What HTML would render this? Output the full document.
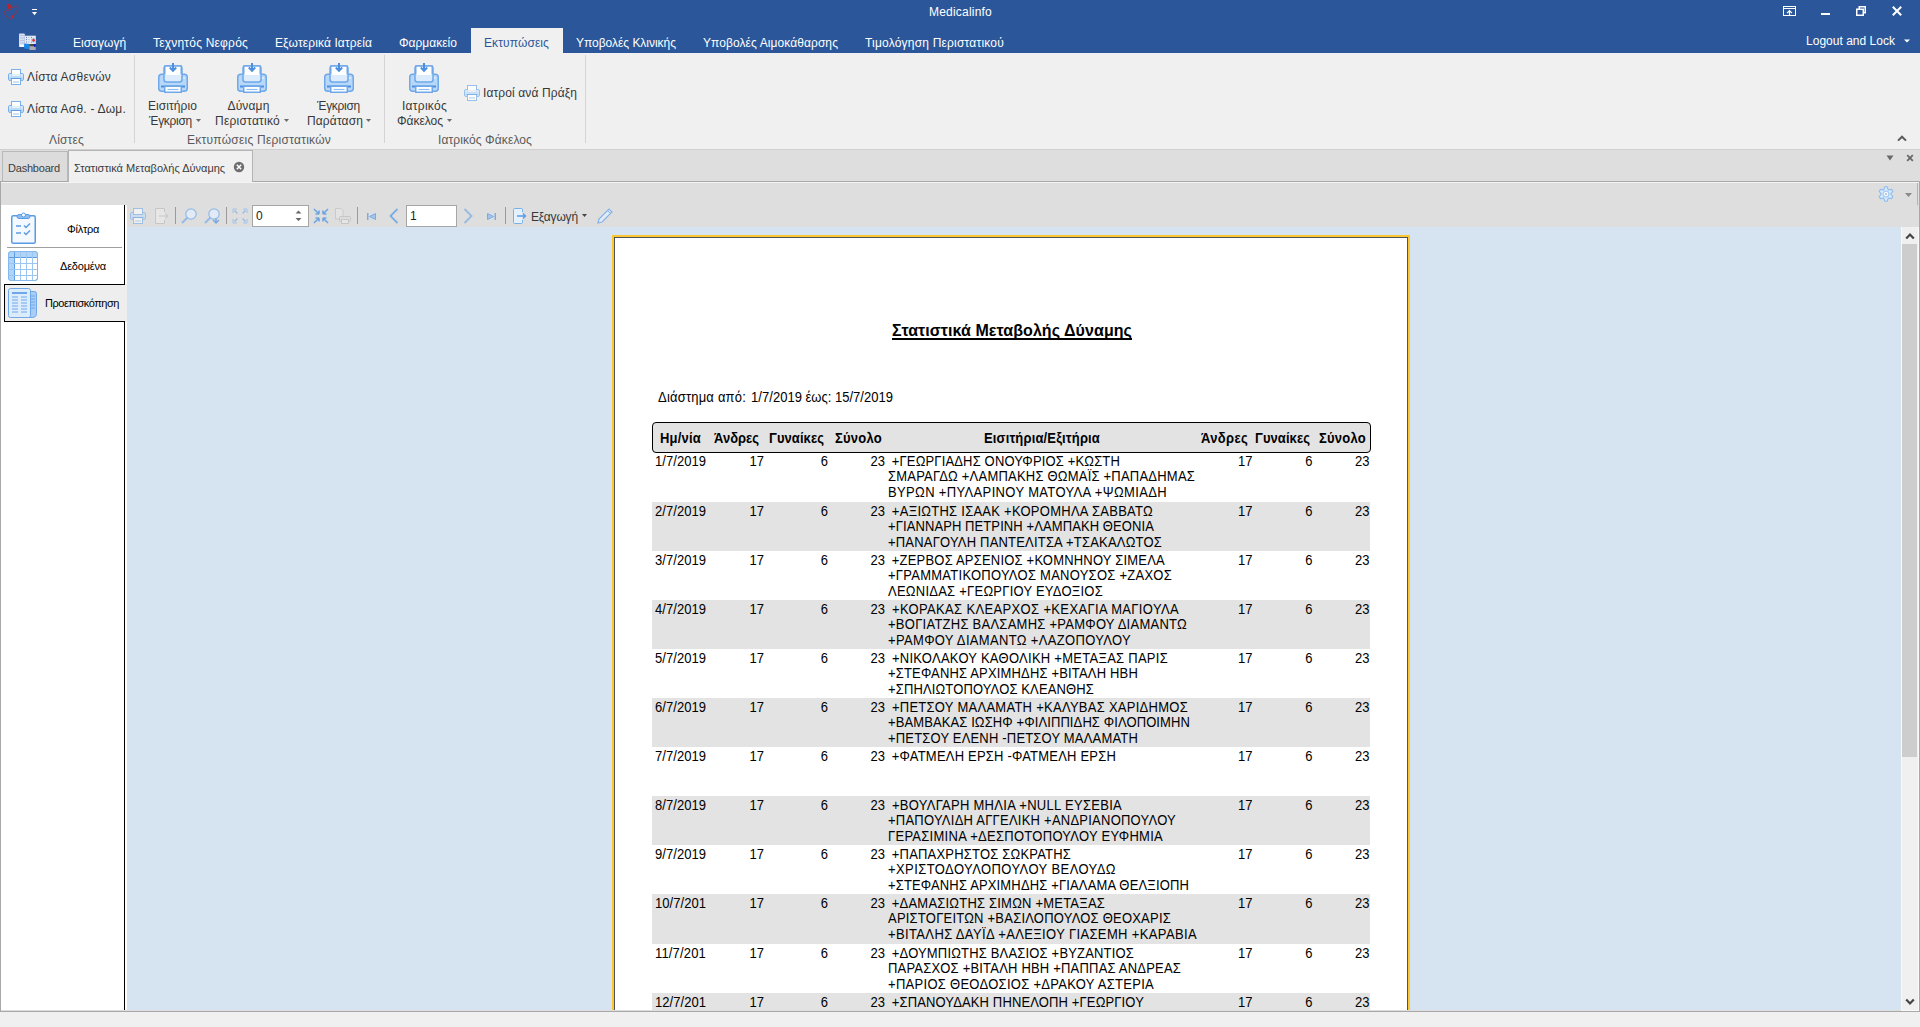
<!DOCTYPE html>
<html><head><meta charset="utf-8">
<style>
*{box-sizing:border-box}
html,body{margin:0;padding:0}
body{width:1920px;height:1027px;overflow:hidden;position:relative;background:#f0f0f0;font-family:"Liberation Sans",sans-serif;color:#262626}
.a{position:absolute;white-space:pre;line-height:1}
.t12{font-size:12px}
.w{color:#fff}
svg{position:absolute;overflow:visible}
.pg{position:absolute;left:612px;top:235px;width:798px;height:800px;background:#fff;border:2px solid #fcc630}
.pg .in{position:absolute;left:0;top:0;right:0;bottom:0;border:1px solid #50535c}
.rp{position:absolute;color:#000;white-space:pre;line-height:1}
</style></head><body>
<div style="position:absolute;left:0;top:0;width:1920px;height:53px;background:#2b579a"></div>
<svg style="left:0px;top:0px" width="22" height="24" viewBox="0 0 22 24">
<path d="M9.8 10.4 C8 10.1 5.6 10 4.6 11.3 C3.8 12.5 4 14 5.2 15.3 C7 17.2 9.5 18.5 11.2 19.6" fill="none" stroke="#b8242b" stroke-width="0.9" opacity="0.7"/>
<path d="M9.6 10.6 C11.4 8.6 13.5 6.3 15.8 6.1 C17.2 6.1 17.9 7 17.8 8.2 C17.6 10.5 16 13 12.8 16.5" fill="none" stroke="#b8242b" stroke-width="0.9" opacity="0.85"/>
<ellipse cx="8.9" cy="6.4" rx="2.1" ry="2.6" fill="#b8242b" transform="rotate(-12 8.9 6.4)"/>
<path d="M9.7 9 L9.4 13.3" stroke="#b8242b" stroke-width="0.8" opacity="0.7"/>
<circle cx="12.7" cy="16.7" r="1.5" fill="#c0262d"/></svg>
<svg style="left:32px;top:9px" width="5" height="7" viewBox="0 0 5 7"><rect x="0" y="0" width="5" height="1" fill="#fff"/><path d="M0 3 L5 3 L2.5 6.2 Z" fill="#fff"/></svg>
<div class="a" style="left:929.00px;top:6.34px;font-size:12px;color:#ffffff;letter-spacing:0.209px;">Medicalinfo</div>
<svg style="left:1783px;top:6px" width="13" height="10" viewBox="0 0 13 10"><rect x="0.5" y="0.5" width="12" height="9" fill="none" stroke="#fff" stroke-width="1"/><path d="M0.5 2.5 H12.5" stroke="#fff" stroke-width="1"/><path d="M6.5 9.5 V5 M4 7.2 L6.5 4.7 L9 7.2" stroke="#fff" stroke-width="1.2" fill="none"/></svg>
<div style="position:absolute;left:1821px;top:13px;width:9px;height:2px;background:#fff"></div>
<svg style="left:1856px;top:6px" width="10" height="10" viewBox="0 0 10 10"><rect x="0.75" y="3.25" width="6.5" height="6" fill="none" stroke="#fff" stroke-width="1.5"/><path d="M3.25 3.25 V0.75 H9.25 V6.75 H7.25" fill="none" stroke="#fff" stroke-width="1.5"/></svg>
<svg style="left:1892px;top:6px" width="10" height="10" viewBox="0 0 10 10"><path d="M0.8 0.8 L9.2 9.2 M9.2 0.8 L0.8 9.2" stroke="#fff" stroke-width="2"/></svg>
<svg style="left:19px;top:33px" width="18" height="18" viewBox="0 0 18 18">
<rect x="0" y="0.6" width="5.8" height="13.4" rx="0.8" fill="#d9dff0"/>
<path d="M0.8 2.5 H5 M0.8 5 H5 M0.8 7.5 H5 M0.8 10 H5" stroke="#aeb9d8" stroke-width="0.7"/>
<rect x="0.8" y="11.8" width="4" height="2" fill="#fff"/>
<rect x="5.8" y="2.7" width="11" height="8.3" fill="#e6eaf5"/>
<path d="M7 4.4 H7.8 M12 4.4 H12.8 M7 6.6 H7.8 M12 6.6 H12.8 M7 9.1 H7.8 M12 9.1 H12.8" stroke="#3a64b0" stroke-width="1"/>
<path d="M9 4.4 H10.6 M9 6.6 H10.6 M9 9.1 H10.6" stroke="#b7c3e0" stroke-width="0.9"/>
<circle cx="14.6" cy="7.2" r="2.5" fill="#b9d4f2"/>
<path d="M14.6 5.2 L16.4 7.2 L14.6 9.2 L12.8 7.2Z" fill="#e53a3a"/>
<path d="M5.2 10.4 L10.4 11 L10.4 16.2 L5.2 15.4Z" fill="#1a86e6"/>
<rect x="10.5" y="11" width="6.2" height="6" fill="#a9aab4"/>
<rect x="10.5" y="11" width="6.2" height="2.2" fill="#4a4a3c"/>
<rect x="14.8" y="11.2" width="1.9" height="2.5" fill="#1010d0"/>
</svg>
<div style="position:absolute;left:471px;top:28px;width:92px;height:26px;background:#f0f0f0"></div>
<div class="a" style="left:73.00px;top:36.84px;font-size:12px;color:#ffffff;">Εισαγωγή</div>
<div class="a" style="left:153.00px;top:36.84px;font-size:12px;color:#ffffff;letter-spacing:0.203px;">Τεχνητός Νεφρός</div>
<div class="a" style="left:275.00px;top:36.84px;font-size:12px;color:#ffffff;letter-spacing:0.113px;">Εξωτερικά Ιατρεία</div>
<div class="a" style="left:399.00px;top:36.84px;font-size:12px;color:#ffffff;letter-spacing:0.012px;">Φαρμακείο</div>
<div class="a" style="left:576.00px;top:36.84px;font-size:12px;color:#ffffff;letter-spacing:-0.024px;">Υποβολές Κλινικής</div>
<div class="a" style="left:703.00px;top:36.84px;font-size:12px;color:#ffffff;letter-spacing:0.081px;">Υποβολές Αιμοκάθαρσης</div>
<div class="a" style="left:865.00px;top:36.84px;font-size:12px;color:#ffffff;letter-spacing:0.199px;">Τιμολόγηση Περιστατικού</div>
<div class="a" style="left:484.00px;top:36.84px;font-size:12px;color:#2b579a;letter-spacing:0.100px;">Εκτυπώσεις</div>
<div class="a" style="left:1806.00px;top:34.84px;font-size:12px;color:#ffffff;letter-spacing:0.017px;">Logout and Lock</div>
<svg style="left:1904px;top:39px" width="6" height="4" viewBox="0 0 6 4"><path d="M0 0.5 H6 L3 3.6Z" fill="#fff"/></svg>
<svg style="left:8px;top:69px" width="16" height="16" viewBox="0 0 16 16">
<rect x="0.5" y="4.5" width="15" height="7" rx="1.5" fill="#bcdcfc" stroke="#7ab0ea"/>
<rect x="3.5" y="0.5" width="9" height="7" fill="#fff" stroke="#7ab0ea"/>
<rect x="1" y="5" width="14" height="3" fill="#d8ebfd" opacity="0.7"/>
<rect x="3.5" y="9.5" width="9" height="6" fill="#fff" stroke="#7ab0ea"/>
<path d="M2.5 9.5 H13.5" stroke="#5e9be0"/><path d="M5 13 H11" stroke="#9cc4ef"/>
</svg>
<svg style="left:8px;top:101px" width="16" height="16" viewBox="0 0 16 16">
<rect x="0.5" y="4.5" width="15" height="7" rx="1.5" fill="#bcdcfc" stroke="#7ab0ea"/>
<rect x="3.5" y="0.5" width="9" height="7" fill="#fff" stroke="#7ab0ea"/>
<rect x="1" y="5" width="14" height="3" fill="#d8ebfd" opacity="0.7"/>
<rect x="3.5" y="9.5" width="9" height="6" fill="#fff" stroke="#7ab0ea"/>
<path d="M2.5 9.5 H13.5" stroke="#5e9be0"/><path d="M5 13 H11" stroke="#9cc4ef"/>
</svg>
<div class="a" style="left:27.00px;top:70.84px;font-size:12px;color:#383838;letter-spacing:0.225px;">Λίστα Ασθενών</div>
<div class="a" style="left:27.00px;top:102.84px;font-size:12px;color:#383838;letter-spacing:0.216px;">Λίστα Ασθ. - Δωμ.</div>
<div class="a" style="left:49.00px;top:133.84px;font-size:12px;color:#5a5a5a;letter-spacing:0.172px;">Λίστες</div>
<div style="position:absolute;left:134px;top:55px;width:1px;height:88px;background:#d4d4d4"></div>
<div style="position:absolute;left:384px;top:55px;width:1px;height:88px;background:#d4d4d4"></div>
<div style="position:absolute;left:585px;top:55px;width:1px;height:88px;background:#d4d4d4"></div>
<svg style="left:158px;top:63px" width="30" height="30" viewBox="0 0 30 30">
<rect x="0.75" y="11.25" width="28.5" height="17" rx="3" fill="#b8d8fa" stroke="#6fa8e8" stroke-width="1.5"/>
<rect x="6" y="3" width="18" height="16" rx="2.5" fill="#dcecfd" stroke="#6fa8e8" stroke-width="1.5"/>
<rect x="6.75" y="3" width="16.5" height="9" fill="#fff"/>
<path d="M6.75 11.5 V3 H23.25 V11.5" fill="none" stroke="#6fa8e8" stroke-width="1.5"/>
<path d="M15 0 V7 M11.8 4.5 L15 7.8 L18.2 4.5" fill="none" stroke="#4a8fe0" stroke-width="2"/>
<path d="M3 23.5 H27" stroke="#4a8fe0" stroke-width="2"/>
<rect x="6.75" y="23.25" width="16.5" height="6" fill="#fff" stroke="#6fa8e8" stroke-width="1.5"/>
<path d="M9.5 26.5 H20.5" stroke="#8fbdf0" stroke-width="1.2"/>
<circle cx="26" cy="15" r="0.8" fill="#fff"/>
</svg>
<svg style="left:237px;top:63px" width="30" height="30" viewBox="0 0 30 30">
<rect x="0.75" y="11.25" width="28.5" height="17" rx="3" fill="#b8d8fa" stroke="#6fa8e8" stroke-width="1.5"/>
<rect x="6" y="3" width="18" height="16" rx="2.5" fill="#dcecfd" stroke="#6fa8e8" stroke-width="1.5"/>
<rect x="6.75" y="3" width="16.5" height="9" fill="#fff"/>
<path d="M6.75 11.5 V3 H23.25 V11.5" fill="none" stroke="#6fa8e8" stroke-width="1.5"/>
<path d="M15 0 V7 M11.8 4.5 L15 7.8 L18.2 4.5" fill="none" stroke="#4a8fe0" stroke-width="2"/>
<path d="M3 23.5 H27" stroke="#4a8fe0" stroke-width="2"/>
<rect x="6.75" y="23.25" width="16.5" height="6" fill="#fff" stroke="#6fa8e8" stroke-width="1.5"/>
<path d="M9.5 26.5 H20.5" stroke="#8fbdf0" stroke-width="1.2"/>
<circle cx="26" cy="15" r="0.8" fill="#fff"/>
</svg>
<svg style="left:324px;top:63px" width="30" height="30" viewBox="0 0 30 30">
<rect x="0.75" y="11.25" width="28.5" height="17" rx="3" fill="#b8d8fa" stroke="#6fa8e8" stroke-width="1.5"/>
<rect x="6" y="3" width="18" height="16" rx="2.5" fill="#dcecfd" stroke="#6fa8e8" stroke-width="1.5"/>
<rect x="6.75" y="3" width="16.5" height="9" fill="#fff"/>
<path d="M6.75 11.5 V3 H23.25 V11.5" fill="none" stroke="#6fa8e8" stroke-width="1.5"/>
<path d="M15 0 V7 M11.8 4.5 L15 7.8 L18.2 4.5" fill="none" stroke="#4a8fe0" stroke-width="2"/>
<path d="M3 23.5 H27" stroke="#4a8fe0" stroke-width="2"/>
<rect x="6.75" y="23.25" width="16.5" height="6" fill="#fff" stroke="#6fa8e8" stroke-width="1.5"/>
<path d="M9.5 26.5 H20.5" stroke="#8fbdf0" stroke-width="1.2"/>
<circle cx="26" cy="15" r="0.8" fill="#fff"/>
</svg>
<svg style="left:409px;top:63px" width="30" height="30" viewBox="0 0 30 30">
<rect x="0.75" y="11.25" width="28.5" height="17" rx="3" fill="#b8d8fa" stroke="#6fa8e8" stroke-width="1.5"/>
<rect x="6" y="3" width="18" height="16" rx="2.5" fill="#dcecfd" stroke="#6fa8e8" stroke-width="1.5"/>
<rect x="6.75" y="3" width="16.5" height="9" fill="#fff"/>
<path d="M6.75 11.5 V3 H23.25 V11.5" fill="none" stroke="#6fa8e8" stroke-width="1.5"/>
<path d="M15 0 V7 M11.8 4.5 L15 7.8 L18.2 4.5" fill="none" stroke="#4a8fe0" stroke-width="2"/>
<path d="M3 23.5 H27" stroke="#4a8fe0" stroke-width="2"/>
<rect x="6.75" y="23.25" width="16.5" height="6" fill="#fff" stroke="#6fa8e8" stroke-width="1.5"/>
<path d="M9.5 26.5 H20.5" stroke="#8fbdf0" stroke-width="1.2"/>
<circle cx="26" cy="15" r="0.8" fill="#fff"/>
</svg>
<div class="a" style="left:148.00px;top:99.84px;font-size:12px;color:#383838;letter-spacing:0.075px;">Εισιτήριο</div>
<div class="a" style="left:149.00px;top:114.84px;font-size:12px;color:#383838;letter-spacing:-0.283px;">Έγκριση</div>
<svg style="left:196px;top:119px" width="5" height="3" viewBox="0 0 5 3"><path d="M0 0 H5 L2.5 3Z" fill="#6a6a6a"/></svg>
<div class="a" style="left:227.50px;top:99.84px;font-size:12px;color:#383838;letter-spacing:0.148px;">Δύναμη</div>
<div class="a" style="left:215.00px;top:114.84px;font-size:12px;color:#383838;letter-spacing:0.240px;">Περιστατικό</div>
<svg style="left:284px;top:119px" width="5" height="3" viewBox="0 0 5 3"><path d="M0 0 H5 L2.5 3Z" fill="#6a6a6a"/></svg>
<div class="a" style="left:317.00px;top:99.84px;font-size:12px;color:#383838;letter-spacing:-0.283px;">Έγκριση</div>
<div class="a" style="left:307.00px;top:114.84px;font-size:12px;color:#383838;letter-spacing:0.129px;">Παράταση</div>
<svg style="left:366px;top:119px" width="5" height="3" viewBox="0 0 5 3"><path d="M0 0 H5 L2.5 3Z" fill="#6a6a6a"/></svg>
<div class="a" style="left:402.00px;top:99.84px;font-size:12px;color:#383838;letter-spacing:0.271px;">Ιατρικός</div>
<div class="a" style="left:397.00px;top:114.84px;font-size:12px;color:#383838;letter-spacing:-0.020px;">Φάκελος</div>
<svg style="left:447px;top:119px" width="5" height="3" viewBox="0 0 5 3"><path d="M0 0 H5 L2.5 3Z" fill="#6a6a6a"/></svg>
<div class="a" style="left:187.00px;top:133.84px;font-size:12px;color:#5a5a5a;letter-spacing:0.245px;">Εκτυπώσεις Περιστατικών</div>
<div class="a" style="left:438.00px;top:133.84px;font-size:12px;color:#5a5a5a;letter-spacing:0.106px;">Ιατρικός Φάκελος</div>
<svg opacity="0.75" style="left:464px;top:85px" width="16" height="16" viewBox="0 0 16 16">
<rect x="0.5" y="4.5" width="15" height="7" rx="1.5" fill="#bcdcfc" stroke="#7ab0ea"/>
<rect x="3.5" y="0.5" width="9" height="7" fill="#fff" stroke="#7ab0ea"/>
<rect x="1" y="5" width="14" height="3" fill="#d8ebfd" opacity="0.7"/>
<rect x="3.5" y="9.5" width="9" height="6" fill="#fff" stroke="#7ab0ea"/>
<path d="M2.5 9.5 H13.5" stroke="#5e9be0"/><path d="M5 13 H11" stroke="#9cc4ef"/>
</svg>
<div class="a" style="left:483.00px;top:86.84px;font-size:12px;color:#383838;letter-spacing:0.112px;">Ιατροί ανά Πράξη</div>
<svg style="left:1897px;top:135px" width="10" height="7" viewBox="0 0 10 7"><path d="M1 5.6 L5 1.7 L9 5.6" fill="none" stroke="#5a5a5a" stroke-width="2"/></svg>
<div style="position:absolute;left:0;top:149px;width:1920px;height:862px;background:#dedede"></div>
<div style="position:absolute;left:0;top:149px;width:1920px;height:1px;background:#d0d0d0"></div>
<div style="position:absolute;left:2px;top:151px;width:66px;height:31px;background:#dcdcdc;border:1px solid #b8b8b8;border-bottom:none"></div>
<div style="position:absolute;left:68px;top:150px;width:185px;height:33px;background:#f0f0f0;border:1px solid #b4b4b4;border-bottom:none"></div>
<div style="position:absolute;left:253px;top:181px;width:1667px;height:1px;background:#a8a8a8"></div>
<div style="position:absolute;left:0px;top:181px;width:68px;height:1px;background:#a8a8a8"></div>
<div class="a" style="left:8.00px;top:162.69px;font-size:11px;color:#3c3c3c;letter-spacing:-0.203px;">Dashboard</div>
<div class="a" style="left:74.00px;top:162.69px;font-size:11px;color:#3c3c3c;">Στατιστικά Μεταβολής Δύναμης</div>
<svg style="left:233px;top:161px" width="12" height="12" viewBox="0 0 12 12"><circle cx="6" cy="6" r="5.2" fill="#6e6e6e"/><path d="M3.8 3.8 L8.2 8.2 M8.2 3.8 L3.8 8.2" stroke="#fff" stroke-width="1.5"/></svg>
<svg style="left:1886px;top:155px" width="8" height="6" viewBox="0 0 8 6"><path d="M0.5 0.5 H7.5 L4 5.5Z" fill="#6a6a6a"/></svg>
<svg style="left:1906px;top:154px" width="8" height="8" viewBox="0 0 8 8"><path d="M1.2 1.2 L6.8 6.8 M6.8 1.2 L1.2 6.8" stroke="#666" stroke-width="1.7"/></svg>
<div style="position:absolute;left:0;top:182px;width:1px;height:829px;background:#a8a8a8"></div>
<div style="position:absolute;left:1919px;top:182px;width:1px;height:830px;background:#a8a8a8"></div>
<div style="position:absolute;left:1917px;top:183px;width:1px;height:22px;background:#b4b4b4"></div>
<div style="position:absolute;left:1px;top:182px;width:1918px;height:1px;background:#f4f4f4"></div>
<div style="position:absolute;left:0;top:1011px;width:1920px;height:1px;background:#a8a8a8"></div>
<svg style="left:1878px;top:186px" width="16" height="16" viewBox="0 0 16 16"><path d="M5.70 4.02 L6.86 0.79 L9.14 0.79 L10.30 4.02 L13.67 3.41 L14.82 5.38 L12.60 8.00 L14.82 10.62 L13.67 12.59 L10.30 11.98 L9.14 15.21 L6.86 15.21 L5.70 11.98 L2.33 12.59 L1.18 10.62 L3.40 8.00 L1.18 5.38 L2.33 3.41 Z" fill="#d9eafd" stroke="#8dbcf0" stroke-width="1.1" stroke-linejoin="round"/><circle cx="8" cy="8" r="2.9" fill="#f4f9ff" stroke="#a6ccf4" stroke-width="1.2"/><rect x="7.1" y="7.1" width="1.8" height="1.8" fill="#b5c3d3"/></svg>
<svg style="left:1905px;top:193px" width="7" height="4" viewBox="0 0 7 4"><path d="M0 0 H7 L3.5 4Z" fill="#8a8a8a"/></svg>
<div style="position:absolute;left:1px;top:205px;width:126px;height:805px;background:#fff"></div>
<div style="position:absolute;left:124px;top:205px;width:1px;height:80px;background:#000"></div>
<div style="position:absolute;left:124px;top:321px;width:1px;height:689px;background:#000"></div>
<div style="position:absolute;left:7px;top:247px;width:115px;height:1px;background:#a0a0a0"></div>
<div style="position:absolute;left:4px;top:284px;width:123px;height:38px;background:#eeeeee"></div>
<div style="position:absolute;left:4px;top:284px;width:121px;height:38px;border:1px solid #000;border-right:none"></div>
<div style="position:absolute;left:124px;top:284px;width:1px;height:1px;background:#000"></div>
<svg style="left:11px;top:213px" width="25" height="31" viewBox="0 0 25 31">
<rect x="0.75" y="2.75" width="23.5" height="27.5" rx="1.5" fill="#f4f9ff" stroke="#5b9be3" stroke-width="1.5"/>
<rect x="6" y="1.5" width="13" height="4" rx="2" fill="#8fbdf0" stroke="#5b9be3" stroke-width="1"/>
<circle cx="12.5" cy="2" r="2" fill="#fff" stroke="#5b9be3" stroke-width="1"/>
<path d="M5 13 H10 M5 20 H10" stroke="#5b9be3" stroke-width="1.4"/>
<path d="M13 12.5 L15 14.5 L19 10.5 M13 19.5 L15 21.5 L19 17.5" fill="none" stroke="#5b9be3" stroke-width="1.4"/>
</svg>
<svg style="left:8px;top:251px" width="30" height="30" viewBox="0 0 30 30">
<rect x="0.5" y="0.5" width="29" height="29" rx="2.5" fill="#fff" stroke="#86b8ee"/>
<path d="M3 0.5 H27 Q29.5 0.5 29.5 3 V6.5 H6.5 V29.5 H3 Q0.5 29.5 0.5 27 V3 Q0.5 0.5 3 0.5Z" fill="#b0d3f8"/>
<path d="M0.5 6.5 H29.5 M6.5 0.5 V29.5" stroke="#5f9de4" stroke-width="1"/>
<path d="M0.5 12.5 H29.5 M0.5 18.5 H29.5 M0.5 24.5 H29.5 M12.5 0.5 V29.5 M18.5 0.5 V29.5 M24.5 0.5 V29.5" stroke="#9cc6f2" stroke-width="1"/>
<rect x="0.5" y="0.5" width="29" height="29" rx="2.5" fill="none" stroke="#86b8ee"/>
</svg>
<svg style="left:8px;top:288px" width="30" height="30" viewBox="0 0 30 30">
<path d="M20 3.5 H26.5 Q28.5 3.5 28.5 5.5 V25.5 Q28.5 29.5 24 29.5 H20 Z" fill="#a9cdf5" stroke="#6fa8e8"/>
<rect x="0.5" y="0.5" width="22" height="29" rx="2" fill="#dcecfd" stroke="#6fa8e8"/>
<path d="M4 5 H19" stroke="#4a8fe0" stroke-width="1.5"/>
<path d="M4 9 H10 M13 9 H19 M4 12 H10 M13 12 H19 M4 15 H10 M13 15 H19 M4 18 H10 M13 18 H19 M4 21 H10 M13 21 H19 M4 24 H10 M13 24 H19 M23 8 H27 M23 11 H27 M23 14 H27 M23 17 H27 M23 20 H27" stroke="#6fa8e8" stroke-width="1"/>
</svg>
<div class="a" style="left:67.00px;top:224.19px;font-size:11px;color:#000;letter-spacing:-0.281px;">Φίλτρα</div>
<div class="a" style="left:60.00px;top:260.89px;font-size:11px;color:#000;letter-spacing:-0.199px;">Δεδομένα</div>
<div class="a" style="left:45.00px;top:298.39px;font-size:11px;color:#000;letter-spacing:-0.462px;">Προεπισκόπηση</div>
<div style="position:absolute;left:127px;top:227px;width:1774px;height:783px;background:#d6e3f0"></div>
<div style="position:absolute;left:175px;top:207px;width:1px;height:17px;background:#9a9a9a"></div>
<div style="position:absolute;left:226px;top:207px;width:1px;height:17px;background:#9a9a9a"></div>
<div style="position:absolute;left:357px;top:207px;width:1px;height:17px;background:#9a9a9a"></div>
<div style="position:absolute;left:505px;top:207px;width:1px;height:17px;background:#9a9a9a"></div>
<svg style="left:130px;top:208px" width="16" height="16" viewBox="0 0 16 16" opacity="0.55">
<rect x="0.5" y="4.5" width="15" height="7" rx="1.5" fill="#bcdcfc" stroke="#6fa8e8"/>
<rect x="3.5" y="0.5" width="9" height="6" fill="#fff" stroke="#6fa8e8"/>
<rect x="3.5" y="9.5" width="9" height="6" fill="#fff" stroke="#6fa8e8"/>
<path d="M2.5 9.5 H13.5" stroke="#4a8fe0"/><path d="M5 13 H11" stroke="#8fbdf0"/></svg>
<svg style="left:155px;top:208px" width="14" height="16" viewBox="0 0 14 16" opacity="0.5">
<path d="M9.5 4 V0.5 H0.5 V15.5 H9.5 V12" fill="#eee" stroke="#b0b0b0"/><path d="M4 8 H13 M10.5 5.5 L13 8 L10.5 10.5" fill="none" stroke="#b0b0b0"/></svg>
<svg style="left:181px;top:208px" width="16" height="16" viewBox="0 0 16 16" opacity="0.75">
<circle cx="10" cy="6" r="5.2" fill="#e4f0fd" stroke="#7ab0ea" stroke-width="1.2"/><path d="M6.5 9.5 L1 15" stroke="#7ab0ea" stroke-width="2"/></svg>
<svg style="left:204px;top:208px" width="16" height="16" viewBox="0 0 16 16" opacity="0.75">
<circle cx="10" cy="6" r="5.2" fill="#e4f0fd" stroke="#7ab0ea" stroke-width="1.2"/><path d="M6.5 9.5 L1 15" stroke="#7ab0ea" stroke-width="2"/><path d="M9 12 L12 15 L15 12 M12 15 V10" stroke="#5b9be3" stroke-width="1.5" fill="none"/></svg>
<svg style="left:232px;top:208px" width="16" height="16" viewBox="0 0 16 16" opacity="0.6">
<path d="M1.5 1.5 L5.5 5.5 M14.5 1.5 L10.5 5.5 M1.5 14.5 L5.5 10.5 M14.5 14.5 L10.5 10.5" stroke="#6fa8e8" stroke-width="1.3"/>
<path d="M1 1 H4.5 L1 4.5Z M15 1 H11.5 L15 4.5Z M1 15 H4.5 L1 11.5Z M15 15 H11.5 L15 11.5Z" fill="#e4f0fd" stroke="#6fa8e8" stroke-width="0.9" stroke-linejoin="round"/></svg>
<svg style="left:313px;top:208px" width="16" height="16" viewBox="0 0 16 16" opacity="0.85">
<path d="M1 1 L6 6 M6 6 H2.5 M6 6 V2.5 M15 1 L10 6 M10 6 H13.5 M10 6 V2.5 M1 15 L6 10 M6 10 H2.5 M6 10 V13.5 M15 15 L10 10 M10 10 H13.5 M10 10 V13.5" stroke="#5b9be3" stroke-width="1.6" fill="none"/></svg>
<svg style="left:335px;top:208px" width="16" height="16" viewBox="0 0 16 16" opacity="0.5">
<path d="M0.5 0.5 H6 L8 2.5 V11 H0.5 Z" fill="#e8e8e8" stroke="#b8b8b8"/><rect x="4.5" y="8.5" width="11" height="5" rx="1" fill="#ddd" stroke="#b0b0b0"/><rect x="6.5" y="11.5" width="7" height="4" fill="#eee" stroke="#b0b0b0"/></svg>
<svg style="left:367px;top:213px" width="9" height="7" viewBox="0 0 9 7" opacity="0.75"><path d="M0.75 0 V7" stroke="#5b9be3" stroke-width="1.5"/><path d="M8.5 0.5 L2.5 3.5 L8.5 6.5 Z" fill="#8fbdf0" stroke="#5b9be3"/></svg>
<svg style="left:389px;top:208px" width="10" height="16" viewBox="0 0 10 16" opacity="0.75"><path d="M8.5 1 L1.5 8 L8.5 15" fill="none" stroke="#5b9be3" stroke-width="1.8"/></svg>
<svg style="left:463px;top:208px" width="10" height="16" viewBox="0 0 10 16" opacity="0.55"><path d="M1.5 1 L8.5 8 L1.5 15" fill="none" stroke="#5b9be3" stroke-width="1.8"/></svg>
<svg style="left:487px;top:213px" width="9" height="7" viewBox="0 0 9 7" opacity="0.75"><path d="M8.25 0 V7" stroke="#5b9be3" stroke-width="1.5"/><path d="M0.5 0.5 L6.5 3.5 L0.5 6.5 Z" fill="#8fbdf0" stroke="#5b9be3"/></svg>
<svg style="left:513px;top:208px" width="14" height="16" viewBox="0 0 14 16">
<path d="M9.5 4 V1.5 Q9.5 0.5 8.5 0.5 H1.5 Q0.5 0.5 0.5 1.5 V14.5 Q0.5 15.5 1.5 15.5 H8.5 Q9.5 15.5 9.5 14.5 V12" fill="#e4f0fd" stroke="#7ab0ea"/><path d="M4 8 H12.5 M10 5.5 L12.5 8 L10 10.5" fill="none" stroke="#5b9be3" stroke-width="1.3"/></svg>
<svg style="left:582px;top:214px" width="5" height="3" viewBox="0 0 5 3"><path d="M0 0 H5 L2.5 3Z" fill="#444"/></svg>
<svg style="left:597px;top:208px" width="16" height="16" viewBox="0 0 16 16" opacity="0.8"><path d="M1 15 L2 11 L12 1 L15 4 L5 14 Z" fill="#e4f0fd" stroke="#6fa8e8" stroke-width="1.2"/><path d="M10.5 2.5 L13.5 5.5" stroke="#6fa8e8"/></svg>
<div style="position:absolute;left:252px;top:205px;width:57px;height:22px;background:#fff;border:1px solid #a6a6a6"></div>
<svg style="left:295px;top:210px" width="7" height="12" viewBox="0 0 7 12"><path d="M0.5 3.5 L3.5 0.5 L6.5 3.5Z M0.5 8 L3.5 11 L6.5 8Z" fill="#666"/></svg>
<div class="a" style="left:256.00px;top:210.34px;font-size:12px;color:#222;">0</div>
<div style="position:absolute;left:406px;top:205px;width:51px;height:22px;background:#fff;border:1px solid #a6a6a6"></div>
<div class="a" style="left:410.00px;top:210.34px;font-size:12px;color:#222;">1</div>
<div class="a" style="left:531.00px;top:210.84px;font-size:12px;color:#383838;letter-spacing:-0.150px;">Εξαγωγή</div>
<div style="position:absolute;left:1901px;top:227px;width:18px;height:784px;background:#fafafa"></div>
<div style="position:absolute;left:1902px;top:227px;width:16px;height:783px;background:#f0f0f0"></div>
<div style="position:absolute;left:1902px;top:244px;width:15px;height:513px;background:#cdcdcd"></div>
<svg style="left:1905px;top:232px" width="10" height="8" viewBox="0 0 10 8"><path d="M1.2 6.5 L5 2.6 L8.8 6.5" fill="none" stroke="#444" stroke-width="2.2"/></svg>
<svg style="left:1905px;top:998px" width="10" height="8" viewBox="0 0 10 8"><path d="M1.2 1.5 L5 5.4 L8.8 1.5" fill="none" stroke="#444" stroke-width="2.2"/></svg>
<div style="position:absolute;left:612px;top:235px;width:798px;height:775px;background:#fcc630"></div>
<div style="position:absolute;left:614px;top:237px;width:794px;height:773px;background:#fff;border:1px solid #50535c;border-bottom:none"></div>
<div class="a" style="left:892.00px;top:323.16px;font-size:16px;color:#000;font-weight:bold;letter-spacing:0.074px;text-decoration:underline;text-decoration-thickness:1.5px;text-underline-offset:2px;text-decoration-skip-ink:none;">Στατιστικά Μεταβολής Δύναμης</div>
<div class="a" style="left:658.00px;top:390.50px;font-size:13px;color:#000;letter-spacing:0.198px;transform:scaleY(1.1);transform-origin:0 11px;">Διάστημα από:</div>
<div class="a" style="left:751.00px;top:390.50px;font-size:13px;color:#000;letter-spacing:0.049px;transform:scaleY(1.1);transform-origin:0 11px;">1/7/2019</div>
<div class="a" style="left:805.50px;top:390.50px;font-size:13px;color:#000;letter-spacing:0.043px;transform:scaleY(1.1);transform-origin:0 11px;">έως:</div>
<div class="a" style="left:835.00px;top:390.50px;font-size:13px;color:#000;letter-spacing:0.017px;transform:scaleY(1.1);transform-origin:0 11px;">15/7/2019</div>
<div style="position:absolute;left:652px;top:422px;width:719px;height:31px;background:#e3e3e3;border:1.3px solid #000;border-radius:4px"></div>
<div class="a" style="left:660.00px;top:432.00px;font-size:13px;color:#000;font-weight:bold;letter-spacing:0.201px;transform:scaleY(1.1);transform-origin:0 11px;">Ημ/νία</div>
<div class="a" style="left:714.00px;top:432.00px;font-size:13px;color:#000;font-weight:bold;transform:scaleY(1.1);transform-origin:0 11px;">Άνδρες</div>
<div class="a" style="left:769.00px;top:432.00px;font-size:13px;color:#000;font-weight:bold;letter-spacing:0.074px;transform:scaleY(1.1);transform-origin:0 11px;">Γυναίκες</div>
<div class="a" style="left:835.00px;top:432.00px;font-size:13px;color:#000;font-weight:bold;letter-spacing:0.240px;transform:scaleY(1.1);transform-origin:0 11px;">Σύνολο</div>
<div class="a" style="left:984.00px;top:432.00px;font-size:13px;color:#000;font-weight:bold;letter-spacing:0.153px;transform:scaleY(1.1);transform-origin:0 11px;">Εισιτήρια/Εξιτήρια</div>
<div class="a" style="left:1201.00px;top:432.00px;font-size:13px;color:#000;font-weight:bold;letter-spacing:0.333px;transform:scaleY(1.1);transform-origin:0 11px;">Άνδρες</div>
<div class="a" style="left:1255.00px;top:432.00px;font-size:13px;color:#000;font-weight:bold;letter-spacing:0.074px;transform:scaleY(1.1);transform-origin:0 11px;">Γυναίκες</div>
<div class="a" style="left:1319.00px;top:432.00px;font-size:13px;color:#000;font-weight:bold;letter-spacing:0.240px;transform:scaleY(1.1);transform-origin:0 11px;">Σύνολο</div>
<div class="a" style="left:655.00px;top:455.00px;font-size:13px;color:#000;letter-spacing:0.049px;transform:scaleY(1.1);transform-origin:0 11px;">1/7/2019</div>
<div class="a" style="left:749.53px;top:455.00px;font-size:13px;color:#000;transform:scaleY(1.1);transform-origin:0 11px;">17</div>
<div class="a" style="left:820.77px;top:455.00px;font-size:13px;color:#000;transform:scaleY(1.1);transform-origin:0 11px;">6</div>
<div class="a" style="left:870.53px;top:455.00px;font-size:13px;color:#000;transform:scaleY(1.1);transform-origin:0 11px;">23</div>
<div class="a" style="left:1238.03px;top:455.00px;font-size:13px;color:#000;transform:scaleY(1.1);transform-origin:0 11px;">17</div>
<div class="a" style="left:1305.27px;top:455.00px;font-size:13px;color:#000;transform:scaleY(1.1);transform-origin:0 11px;">6</div>
<div class="a" style="left:1355.03px;top:455.00px;font-size:13px;color:#000;transform:scaleY(1.1);transform-origin:0 11px;">23</div>
<div class="a" style="left:888.00px;top:455.00px;font-size:13px;color:#000;letter-spacing:0.156px;transform:scaleY(1.1);transform-origin:0 11px;"> +ΓΕΩΡΓΙΑΔΗΣ ΟΝΟΥΦΡΙΟΣ +ΚΩΣΤΗ</div>
<div class="a" style="left:888.00px;top:470.00px;font-size:13px;color:#000;letter-spacing:0.213px;transform:scaleY(1.1);transform-origin:0 11px;">ΣΜΑΡΑΓΔΩ +ΛΑΜΠΑΚΗΣ ΘΩΜΑΪΣ +ΠΑΠΑΔΗΜΑΣ</div>
<div class="a" style="left:888.00px;top:486.00px;font-size:13px;color:#000;letter-spacing:0.350px;transform:scaleY(1.1);transform-origin:0 11px;">ΒΥΡΩΝ +ΠΥΛΑΡΙΝΟΥ ΜΑΤΟΥΛΑ +ΨΩΜΙΑΔΗ</div>
<div style="position:absolute;left:652px;top:502px;width:718px;height:49px;background:#e3e3e3"></div>
<div class="a" style="left:655.00px;top:505.00px;font-size:13px;color:#000;letter-spacing:0.049px;transform:scaleY(1.1);transform-origin:0 11px;">2/7/2019</div>
<div class="a" style="left:749.53px;top:505.00px;font-size:13px;color:#000;transform:scaleY(1.1);transform-origin:0 11px;">17</div>
<div class="a" style="left:820.77px;top:505.00px;font-size:13px;color:#000;transform:scaleY(1.1);transform-origin:0 11px;">6</div>
<div class="a" style="left:870.53px;top:505.00px;font-size:13px;color:#000;transform:scaleY(1.1);transform-origin:0 11px;">23</div>
<div class="a" style="left:1238.03px;top:505.00px;font-size:13px;color:#000;transform:scaleY(1.1);transform-origin:0 11px;">17</div>
<div class="a" style="left:1305.27px;top:505.00px;font-size:13px;color:#000;transform:scaleY(1.1);transform-origin:0 11px;">6</div>
<div class="a" style="left:1355.03px;top:505.00px;font-size:13px;color:#000;transform:scaleY(1.1);transform-origin:0 11px;">23</div>
<div class="a" style="left:888.00px;top:505.00px;font-size:13px;color:#000;letter-spacing:0.263px;transform:scaleY(1.1);transform-origin:0 11px;"> +ΑΞΙΩΤΗΣ ΙΣΑΑΚ +ΚΟΡΟΜΗΛΑ ΣΑΒΒΑΤΩ</div>
<div class="a" style="left:888.00px;top:520.00px;font-size:13px;color:#000;letter-spacing:0.094px;transform:scaleY(1.1);transform-origin:0 11px;">+ΓΙΑΝΝΑΡΗ ΠΕΤΡΙΝΗ +ΛΑΜΠΑΚΗ ΘΕΟΝΙΑ</div>
<div class="a" style="left:888.00px;top:536.00px;font-size:13px;color:#000;letter-spacing:0.191px;transform:scaleY(1.1);transform-origin:0 11px;">+ΠΑΝΑΓΟΥΛΗ ΠΑΝΤΕΛΙΤΣΑ +ΤΣΑΚΑΛΩΤΟΣ</div>
<div class="a" style="left:655.00px;top:554.00px;font-size:13px;color:#000;letter-spacing:0.049px;transform:scaleY(1.1);transform-origin:0 11px;">3/7/2019</div>
<div class="a" style="left:749.53px;top:554.00px;font-size:13px;color:#000;transform:scaleY(1.1);transform-origin:0 11px;">17</div>
<div class="a" style="left:820.77px;top:554.00px;font-size:13px;color:#000;transform:scaleY(1.1);transform-origin:0 11px;">6</div>
<div class="a" style="left:870.53px;top:554.00px;font-size:13px;color:#000;transform:scaleY(1.1);transform-origin:0 11px;">23</div>
<div class="a" style="left:1238.03px;top:554.00px;font-size:13px;color:#000;transform:scaleY(1.1);transform-origin:0 11px;">17</div>
<div class="a" style="left:1305.27px;top:554.00px;font-size:13px;color:#000;transform:scaleY(1.1);transform-origin:0 11px;">6</div>
<div class="a" style="left:1355.03px;top:554.00px;font-size:13px;color:#000;transform:scaleY(1.1);transform-origin:0 11px;">23</div>
<div class="a" style="left:888.00px;top:554.00px;font-size:13px;color:#000;letter-spacing:0.199px;transform:scaleY(1.1);transform-origin:0 11px;"> +ΖΕΡΒΟΣ ΑΡΣΕΝΙΟΣ +ΚΟΜΝΗΝΟΥ ΣΙΜΕΛΑ</div>
<div class="a" style="left:888.00px;top:569.00px;font-size:13px;color:#000;letter-spacing:0.259px;transform:scaleY(1.1);transform-origin:0 11px;">+ΓΡΑΜΜΑΤΙΚΟΠΟΥΛΟΣ ΜΑΝΟΥΣΟΣ +ΖΑΧΟΣ</div>
<div class="a" style="left:888.00px;top:585.00px;font-size:13px;color:#000;letter-spacing:0.240px;transform:scaleY(1.1);transform-origin:0 11px;">ΛΕΩΝΙΔΑΣ +ΓΕΩΡΓΙΟΥ ΕΥΔΟΞΙΟΣ</div>
<div style="position:absolute;left:652px;top:600px;width:718px;height:49px;background:#e3e3e3"></div>
<div class="a" style="left:655.00px;top:603.00px;font-size:13px;color:#000;letter-spacing:0.049px;transform:scaleY(1.1);transform-origin:0 11px;">4/7/2019</div>
<div class="a" style="left:749.53px;top:603.00px;font-size:13px;color:#000;transform:scaleY(1.1);transform-origin:0 11px;">17</div>
<div class="a" style="left:820.77px;top:603.00px;font-size:13px;color:#000;transform:scaleY(1.1);transform-origin:0 11px;">6</div>
<div class="a" style="left:870.53px;top:603.00px;font-size:13px;color:#000;transform:scaleY(1.1);transform-origin:0 11px;">23</div>
<div class="a" style="left:1238.03px;top:603.00px;font-size:13px;color:#000;transform:scaleY(1.1);transform-origin:0 11px;">17</div>
<div class="a" style="left:1305.27px;top:603.00px;font-size:13px;color:#000;transform:scaleY(1.1);transform-origin:0 11px;">6</div>
<div class="a" style="left:1355.03px;top:603.00px;font-size:13px;color:#000;transform:scaleY(1.1);transform-origin:0 11px;">23</div>
<div class="a" style="left:888.00px;top:603.00px;font-size:13px;color:#000;letter-spacing:0.350px;transform:scaleY(1.1);transform-origin:0 11px;"> +ΚΟΡΑΚΑΣ ΚΛΕΑΡΧΟΣ +ΚΕΧΑΓΙΑ ΜΑΓΙΟΥΛΑ</div>
<div class="a" style="left:888.00px;top:618.00px;font-size:13px;color:#000;letter-spacing:0.254px;transform:scaleY(1.1);transform-origin:0 11px;">+ΒΟΓΙΑΤΖΗΣ ΒΑΛΣΑΜΗΣ +ΡΑΜΦΟΥ ΔΙΑΜΑΝΤΩ</div>
<div class="a" style="left:888.00px;top:634.00px;font-size:13px;color:#000;letter-spacing:0.334px;transform:scaleY(1.1);transform-origin:0 11px;">+ΡΑΜΦΟΥ ΔΙΑΜΑΝΤΩ +ΛΑΖΟΠΟΥΛΟΥ</div>
<div class="a" style="left:655.00px;top:652.00px;font-size:13px;color:#000;letter-spacing:0.049px;transform:scaleY(1.1);transform-origin:0 11px;">5/7/2019</div>
<div class="a" style="left:749.53px;top:652.00px;font-size:13px;color:#000;transform:scaleY(1.1);transform-origin:0 11px;">17</div>
<div class="a" style="left:820.77px;top:652.00px;font-size:13px;color:#000;transform:scaleY(1.1);transform-origin:0 11px;">6</div>
<div class="a" style="left:870.53px;top:652.00px;font-size:13px;color:#000;transform:scaleY(1.1);transform-origin:0 11px;">23</div>
<div class="a" style="left:1238.03px;top:652.00px;font-size:13px;color:#000;transform:scaleY(1.1);transform-origin:0 11px;">17</div>
<div class="a" style="left:1305.27px;top:652.00px;font-size:13px;color:#000;transform:scaleY(1.1);transform-origin:0 11px;">6</div>
<div class="a" style="left:1355.03px;top:652.00px;font-size:13px;color:#000;transform:scaleY(1.1);transform-origin:0 11px;">23</div>
<div class="a" style="left:888.00px;top:652.00px;font-size:13px;color:#000;letter-spacing:0.267px;transform:scaleY(1.1);transform-origin:0 11px;"> +ΝΙΚΟΛΑΚΟΥ ΚΑΘΟΛΙΚΗ +ΜΕΤΑΞΑΣ ΠΑΡΙΣ</div>
<div class="a" style="left:888.00px;top:667.00px;font-size:13px;color:#000;letter-spacing:0.166px;transform:scaleY(1.1);transform-origin:0 11px;">+ΣΤΕΦΑΝΗΣ ΑΡΧΙΜΗΔΗΣ +ΒΙΤΑΛΗ ΗΒΗ</div>
<div class="a" style="left:888.00px;top:683.00px;font-size:13px;color:#000;letter-spacing:0.132px;transform:scaleY(1.1);transform-origin:0 11px;">+ΣΠΗΛΙΩΤΟΠΟΥΛΟΣ ΚΛΕΑΝΘΗΣ</div>
<div style="position:absolute;left:652px;top:698px;width:718px;height:49px;background:#e3e3e3"></div>
<div class="a" style="left:655.00px;top:701.00px;font-size:13px;color:#000;letter-spacing:0.049px;transform:scaleY(1.1);transform-origin:0 11px;">6/7/2019</div>
<div class="a" style="left:749.53px;top:701.00px;font-size:13px;color:#000;transform:scaleY(1.1);transform-origin:0 11px;">17</div>
<div class="a" style="left:820.77px;top:701.00px;font-size:13px;color:#000;transform:scaleY(1.1);transform-origin:0 11px;">6</div>
<div class="a" style="left:870.53px;top:701.00px;font-size:13px;color:#000;transform:scaleY(1.1);transform-origin:0 11px;">23</div>
<div class="a" style="left:1238.03px;top:701.00px;font-size:13px;color:#000;transform:scaleY(1.1);transform-origin:0 11px;">17</div>
<div class="a" style="left:1305.27px;top:701.00px;font-size:13px;color:#000;transform:scaleY(1.1);transform-origin:0 11px;">6</div>
<div class="a" style="left:1355.03px;top:701.00px;font-size:13px;color:#000;transform:scaleY(1.1);transform-origin:0 11px;">23</div>
<div class="a" style="left:888.00px;top:701.00px;font-size:13px;color:#000;letter-spacing:0.269px;transform:scaleY(1.1);transform-origin:0 11px;"> +ΠΕΤΣΟΥ ΜΑΛΑΜΑΤΗ +ΚΑΛΥΒΑΣ ΧΑΡΙΔΗΜΟΣ</div>
<div class="a" style="left:888.00px;top:716.00px;font-size:13px;color:#000;letter-spacing:0.104px;transform:scaleY(1.1);transform-origin:0 11px;">+ΒΑΜΒΑΚΑΣ ΙΩΣΗΦ +ΦΙΛΙΠΠΙΔΗΣ ΦΙΛΟΠΟΙΜΗΝ</div>
<div class="a" style="left:888.00px;top:732.00px;font-size:13px;color:#000;letter-spacing:0.180px;transform:scaleY(1.1);transform-origin:0 11px;">+ΠΕΤΣΟΥ ΕΛΕΝΗ -ΠΕΤΣΟΥ ΜΑΛΑΜΑΤΗ</div>
<div class="a" style="left:655.00px;top:750.00px;font-size:13px;color:#000;letter-spacing:0.049px;transform:scaleY(1.1);transform-origin:0 11px;">7/7/2019</div>
<div class="a" style="left:749.53px;top:750.00px;font-size:13px;color:#000;transform:scaleY(1.1);transform-origin:0 11px;">17</div>
<div class="a" style="left:820.77px;top:750.00px;font-size:13px;color:#000;transform:scaleY(1.1);transform-origin:0 11px;">6</div>
<div class="a" style="left:870.53px;top:750.00px;font-size:13px;color:#000;transform:scaleY(1.1);transform-origin:0 11px;">23</div>
<div class="a" style="left:1238.03px;top:750.00px;font-size:13px;color:#000;transform:scaleY(1.1);transform-origin:0 11px;">17</div>
<div class="a" style="left:1305.27px;top:750.00px;font-size:13px;color:#000;transform:scaleY(1.1);transform-origin:0 11px;">6</div>
<div class="a" style="left:1355.03px;top:750.00px;font-size:13px;color:#000;transform:scaleY(1.1);transform-origin:0 11px;">23</div>
<div class="a" style="left:888.00px;top:750.00px;font-size:13px;color:#000;letter-spacing:0.202px;transform:scaleY(1.1);transform-origin:0 11px;"> +ΦΑΤΜΕΛΗ ΕΡΣΗ -ΦΑΤΜΕΛΗ ΕΡΣΗ</div>
<div style="position:absolute;left:652px;top:796px;width:718px;height:49px;background:#e3e3e3"></div>
<div class="a" style="left:655.00px;top:799.00px;font-size:13px;color:#000;letter-spacing:0.049px;transform:scaleY(1.1);transform-origin:0 11px;">8/7/2019</div>
<div class="a" style="left:749.53px;top:799.00px;font-size:13px;color:#000;transform:scaleY(1.1);transform-origin:0 11px;">17</div>
<div class="a" style="left:820.77px;top:799.00px;font-size:13px;color:#000;transform:scaleY(1.1);transform-origin:0 11px;">6</div>
<div class="a" style="left:870.53px;top:799.00px;font-size:13px;color:#000;transform:scaleY(1.1);transform-origin:0 11px;">23</div>
<div class="a" style="left:1238.03px;top:799.00px;font-size:13px;color:#000;transform:scaleY(1.1);transform-origin:0 11px;">17</div>
<div class="a" style="left:1305.27px;top:799.00px;font-size:13px;color:#000;transform:scaleY(1.1);transform-origin:0 11px;">6</div>
<div class="a" style="left:1355.03px;top:799.00px;font-size:13px;color:#000;transform:scaleY(1.1);transform-origin:0 11px;">23</div>
<div class="a" style="left:888.00px;top:799.00px;font-size:13px;color:#000;letter-spacing:0.290px;transform:scaleY(1.1);transform-origin:0 11px;"> +ΒΟΥΛΓΑΡΗ ΜΗΛΙΑ +NULL ΕΥΣΕΒΙΑ</div>
<div class="a" style="left:888.00px;top:814.00px;font-size:13px;color:#000;letter-spacing:0.237px;transform:scaleY(1.1);transform-origin:0 11px;">+ΠΑΠΟΥΛΙΔΗ ΑΓΓΕΛΙΚΗ +ΑΝΔΡΙΑΝΟΠΟΥΛΟΥ</div>
<div class="a" style="left:888.00px;top:830.00px;font-size:13px;color:#000;letter-spacing:0.273px;transform:scaleY(1.1);transform-origin:0 11px;">ΓΕΡΑΣΙΜΙΝΑ +ΔΕΣΠΟΤΟΠΟΥΛΟΥ ΕΥΦΗΜΙΑ</div>
<div class="a" style="left:655.00px;top:848.00px;font-size:13px;color:#000;letter-spacing:0.049px;transform:scaleY(1.1);transform-origin:0 11px;">9/7/2019</div>
<div class="a" style="left:749.53px;top:848.00px;font-size:13px;color:#000;transform:scaleY(1.1);transform-origin:0 11px;">17</div>
<div class="a" style="left:820.77px;top:848.00px;font-size:13px;color:#000;transform:scaleY(1.1);transform-origin:0 11px;">6</div>
<div class="a" style="left:870.53px;top:848.00px;font-size:13px;color:#000;transform:scaleY(1.1);transform-origin:0 11px;">23</div>
<div class="a" style="left:1238.03px;top:848.00px;font-size:13px;color:#000;transform:scaleY(1.1);transform-origin:0 11px;">17</div>
<div class="a" style="left:1305.27px;top:848.00px;font-size:13px;color:#000;transform:scaleY(1.1);transform-origin:0 11px;">6</div>
<div class="a" style="left:1355.03px;top:848.00px;font-size:13px;color:#000;transform:scaleY(1.1);transform-origin:0 11px;">23</div>
<div class="a" style="left:888.00px;top:848.00px;font-size:13px;color:#000;letter-spacing:0.192px;transform:scaleY(1.1);transform-origin:0 11px;"> +ΠΑΠΑΧΡΗΣΤΟΣ ΣΩΚΡΑΤΗΣ</div>
<div class="a" style="left:888.00px;top:863.00px;font-size:13px;color:#000;letter-spacing:0.425px;transform:scaleY(1.1);transform-origin:0 11px;">+ΧΡΙΣΤΟΔΟΥΛΟΠΟΥΛΟΥ ΒΕΛΟΥΔΩ</div>
<div class="a" style="left:888.00px;top:879.00px;font-size:13px;color:#000;letter-spacing:0.152px;transform:scaleY(1.1);transform-origin:0 11px;">+ΣΤΕΦΑΝΗΣ ΑΡΧΙΜΗΔΗΣ +ΓΙΑΛΑΜΑ ΘΕΛΞΙΟΠΗ</div>
<div style="position:absolute;left:652px;top:894px;width:718px;height:50px;background:#e3e3e3"></div>
<div class="a" style="left:655.00px;top:897.00px;font-size:13px;color:#000;letter-spacing:0.049px;transform:scaleY(1.1);transform-origin:0 11px;">10/7/201</div>
<div class="a" style="left:749.53px;top:897.00px;font-size:13px;color:#000;transform:scaleY(1.1);transform-origin:0 11px;">17</div>
<div class="a" style="left:820.77px;top:897.00px;font-size:13px;color:#000;transform:scaleY(1.1);transform-origin:0 11px;">6</div>
<div class="a" style="left:870.53px;top:897.00px;font-size:13px;color:#000;transform:scaleY(1.1);transform-origin:0 11px;">23</div>
<div class="a" style="left:1238.03px;top:897.00px;font-size:13px;color:#000;transform:scaleY(1.1);transform-origin:0 11px;">17</div>
<div class="a" style="left:1305.27px;top:897.00px;font-size:13px;color:#000;transform:scaleY(1.1);transform-origin:0 11px;">6</div>
<div class="a" style="left:1355.03px;top:897.00px;font-size:13px;color:#000;transform:scaleY(1.1);transform-origin:0 11px;">23</div>
<div class="a" style="left:888.00px;top:897.00px;font-size:13px;color:#000;letter-spacing:0.204px;transform:scaleY(1.1);transform-origin:0 11px;"> +ΔΑΜΑΣΙΩΤΗΣ ΣΙΜΩΝ +ΜΕΤΑΞΑΣ</div>
<div class="a" style="left:888.00px;top:912.00px;font-size:13px;color:#000;letter-spacing:0.220px;transform:scaleY(1.1);transform-origin:0 11px;">ΑΡΙΣΤΟΓΕΙΤΩΝ +ΒΑΣΙΛΟΠΟΥΛΟΣ ΘΕΟΧΑΡΙΣ</div>
<div class="a" style="left:888.00px;top:928.00px;font-size:13px;color:#000;letter-spacing:0.364px;transform:scaleY(1.1);transform-origin:0 11px;">+ΒΙΤΑΛΗΣ ΔΑΥΪΔ +ΑΛΕΞΙΟΥ ΓΙΑΣΕΜΗ +ΚΑΡΑΒΙΑ</div>
<div class="a" style="left:655.00px;top:947.00px;font-size:13px;color:#000;letter-spacing:0.170px;transform:scaleY(1.1);transform-origin:0 11px;">11/7/201</div>
<div class="a" style="left:749.53px;top:947.00px;font-size:13px;color:#000;transform:scaleY(1.1);transform-origin:0 11px;">17</div>
<div class="a" style="left:820.77px;top:947.00px;font-size:13px;color:#000;transform:scaleY(1.1);transform-origin:0 11px;">6</div>
<div class="a" style="left:870.53px;top:947.00px;font-size:13px;color:#000;transform:scaleY(1.1);transform-origin:0 11px;">23</div>
<div class="a" style="left:1238.03px;top:947.00px;font-size:13px;color:#000;transform:scaleY(1.1);transform-origin:0 11px;">17</div>
<div class="a" style="left:1305.27px;top:947.00px;font-size:13px;color:#000;transform:scaleY(1.1);transform-origin:0 11px;">6</div>
<div class="a" style="left:1355.03px;top:947.00px;font-size:13px;color:#000;transform:scaleY(1.1);transform-origin:0 11px;">23</div>
<div class="a" style="left:888.00px;top:947.00px;font-size:13px;color:#000;letter-spacing:0.175px;transform:scaleY(1.1);transform-origin:0 11px;"> +ΔΟΥΜΠΙΩΤΗΣ ΒΛΑΣΙΟΣ +ΒΥΖΑΝΤΙΟΣ</div>
<div class="a" style="left:888.00px;top:962.00px;font-size:13px;color:#000;letter-spacing:0.194px;transform:scaleY(1.1);transform-origin:0 11px;">ΠΑΡΑΣΧΟΣ +ΒΙΤΑΛΗ ΗΒΗ +ΠΑΠΠΑΣ ΑΝΔΡΕΑΣ</div>
<div class="a" style="left:888.00px;top:978.00px;font-size:13px;color:#000;letter-spacing:0.289px;transform:scaleY(1.1);transform-origin:0 11px;">+ΠΑΡΙΟΣ ΘΕΟΔΟΣΙΟΣ +ΔΡΑΚΟΥ ΑΣΤΕΡΙΑ</div>
<div style="position:absolute;left:652px;top:993px;width:718px;height:17px;background:#e3e3e3"></div>
<div class="a" style="left:655.00px;top:996.00px;font-size:13px;color:#000;letter-spacing:0.049px;transform:scaleY(1.1);transform-origin:0 11px;">12/7/201</div>
<div class="a" style="left:749.53px;top:996.00px;font-size:13px;color:#000;transform:scaleY(1.1);transform-origin:0 11px;">17</div>
<div class="a" style="left:820.77px;top:996.00px;font-size:13px;color:#000;transform:scaleY(1.1);transform-origin:0 11px;">6</div>
<div class="a" style="left:870.53px;top:996.00px;font-size:13px;color:#000;transform:scaleY(1.1);transform-origin:0 11px;">23</div>
<div class="a" style="left:1238.03px;top:996.00px;font-size:13px;color:#000;transform:scaleY(1.1);transform-origin:0 11px;">17</div>
<div class="a" style="left:1305.27px;top:996.00px;font-size:13px;color:#000;transform:scaleY(1.1);transform-origin:0 11px;">6</div>
<div class="a" style="left:1355.03px;top:996.00px;font-size:13px;color:#000;transform:scaleY(1.1);transform-origin:0 11px;">23</div>
<div class="a" style="left:888.00px;top:996.00px;font-size:13px;color:#000;letter-spacing:0.135px;transform:scaleY(1.1);transform-origin:0 11px;"> +ΣΠΑΝΟΥΔΑΚΗ ΠΗΝΕΛΟΠΗ +ΓΕΩΡΓΙΟΥ</div>
</body></html>
